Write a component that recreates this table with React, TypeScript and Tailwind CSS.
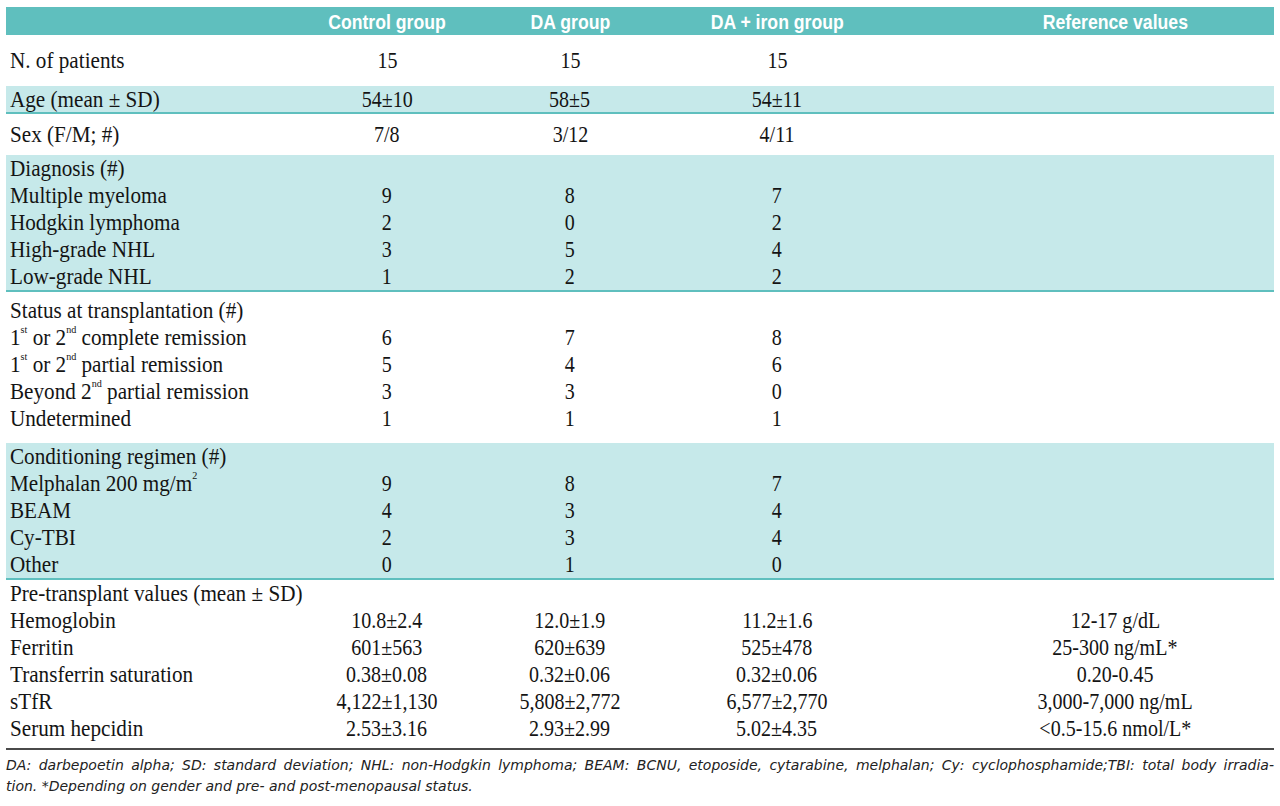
import React from "react";

type Row = { label: React.ReactNode; v: [string, string, string, string?] };

const Sup = ({ children }: { children: React.ReactNode }) => (
  <sup className="text-[11px] relative -top-[3px] align-super leading-none">{children}</sup>
);

const diagnosis: Row[] = [
  { label: "Diagnosis (#)", v: ["", "", ""] },
  { label: "Multiple myeloma", v: ["9", "8", "7"] },
  { label: "Hodgkin lymphoma", v: ["2", "0", "2"] },
  { label: "High-grade NHL", v: ["3", "5", "4"] },
  { label: "Low-grade NHL", v: ["1", "2", "2"] },
];

const status: Row[] = [
  { label: "Status at transplantation (#)", v: ["", "", ""] },
  {
    label: (
      <>
        1<Sup>st</Sup> or 2<Sup>nd</Sup> complete remission
      </>
    ),
    v: ["6", "7", "8"],
  },
  {
    label: (
      <>
        1<Sup>st</Sup> or 2<Sup>nd</Sup> partial remission
      </>
    ),
    v: ["5", "4", "6"],
  },
  {
    label: (
      <>
        Beyond 2<Sup>nd</Sup> partial remission
      </>
    ),
    v: ["3", "3", "0"],
  },
  { label: "Undetermined", v: ["1", "1", "1"] },
];

const conditioning: Row[] = [
  { label: "Conditioning regimen (#)", v: ["", "", ""] },
  {
    label: (
      <>
        Melphalan 200 mg/m<Sup>2</Sup>
      </>
    ),
    v: ["9", "8", "7"],
  },
  { label: "BEAM", v: ["4", "3", "4"] },
  { label: "Cy-TBI", v: ["2", "3", "4"] },
  { label: "Other", v: ["0", "1", "0"] },
];

const pre: Row[] = [
  { label: "Pre-transplant values (mean ± SD)", v: ["", "", ""] },
  { label: "Hemoglobin", v: ["10.8±2.4", "12.0±1.9", "11.2±1.6", "12-17 g/dL"] },
  { label: "Ferritin", v: ["601±563", "620±639", "525±478", "25-300 ng/mL*"] },
  { label: "Transferrin saturation", v: ["0.38±0.08", "0.32±0.06", "0.32±0.06", "0.20-0.45"] },
  { label: "sTfR", v: ["4,122±1,130", "5,808±2,772", "6,577±2,770", "3,000-7,000 ng/mL"] },
  { label: "Serum hepcidin", v: ["2.53±3.16", "2.93±2.99", "5.02±4.35", "<0.5-15.6 nmol/L*"] },
];

// the print font is narrow, so squeeze the serif a bit
const Label = ({ children }: { children: React.ReactNode }) => (
  <span className="inline-block whitespace-nowrap scale-x-[0.92] origin-left">{children}</span>
);

const Val = ({ children }: { children: React.ReactNode }) => (
  <span className="inline-block whitespace-nowrap scale-x-[0.87] origin-center">{children}</span>
);

function TableRow({ row, h = "h-[27px]" }: { row: Row; h?: string }) {
  return (
    <div className={`grid grid-cols-[294px_174px_192px_222px_1fr] items-center ${h}`}>
      <div className="pl-[4px] whitespace-nowrap">
        <Label>{row.label}</Label>
      </div>
      <div className="text-center">{row.v[0] && <Val>{row.v[0]}</Val>}</div>
      <div className="text-center">{row.v[1] && <Val>{row.v[1]}</Val>}</div>
      <div className="text-center">{row.v[2] && <Val>{row.v[2]}</Val>}</div>
      <div className="text-center pl-[68px]">{row.v[3] && <Val>{row.v[3]}</Val>}</div>
    </div>
  );
}

const HeadCell = ({ children }: { children: React.ReactNode }) => (
  <div className="text-center">
    <span className="inline-block whitespace-nowrap scale-x-[0.84] origin-center">{children}</span>
  </div>
);

export default function App() {
  return (
    <div className="w-[1280px] h-[806px] bg-white overflow-hidden px-[6px] text-[#141414] font-['Liberation_Serif',serif] text-[23px] leading-none">
      {/* header */}
      <div className="mt-[7px] h-[28px] bg-[#5fbfbe] grid grid-cols-[294px_174px_192px_222px_1fr] items-center text-white font-bold text-[21px] font-['Liberation_Sans',sans-serif]">
        <div />
        <HeadCell>Control group</HeadCell>
        <HeadCell>DA group</HeadCell>
        <HeadCell>DA + iron group</HeadCell>
        <div className="pl-[68px]">
          <HeadCell>Reference values</HeadCell>
        </div>
      </div>

      <TableRow row={{ label: "N. of patients", v: ["15", "15", "15"] }} h="h-[51px]" />
      <div className="bg-[#c6e9ea] border-b-2 border-[#5fbfbe]">
        <TableRow row={{ label: "Age (mean ± SD)", v: ["54±10", "58±5", "54±11"] }} h="h-[26px]" />
      </div>
      <TableRow row={{ label: "Sex (F/M; #)", v: ["7/8", "3/12", "4/11"] }} h="h-[41px]" />

      <div className="bg-[#c6e9ea] border-b-2 border-[#5fbfbe]">
        {diagnosis.map((r, i) => (
          <TableRow key={i} row={r} />
        ))}
      </div>

      <div className="pt-[5px] pb-[11px]">
        {status.map((r, i) => (
          <TableRow key={i} row={r} />
        ))}
      </div>

      <div className="bg-[#c6e9ea] border-b-2 border-[#5fbfbe]">
        {conditioning.map((r, i) => (
          <TableRow key={i} row={r} />
        ))}
      </div>

      <div className="pb-[6px] border-b-2 border-[#4a4a4a]">
        {pre.map((r, i) => (
          <TableRow key={i} row={r} />
        ))}
      </div>

      {/* footnote */}
      <div className="pt-[5px] italic font-['DejaVu_Sans',sans-serif] text-[14px] leading-[21px] text-[#222]">
        <div className="text-justify [text-align-last:justify] whitespace-nowrap">
          DA: darbepoetin alpha; SD: standard deviation; NHL: non-Hodgkin lymphoma; BEAM: BCNU, etoposide, cytarabine, melphalan; Cy: cyclophosphamide;TBI: total body irradia-
        </div>
        <div>tion. *Depending on gender and pre- and post-menopausal status.</div>
      </div>
    </div>
  );
}
